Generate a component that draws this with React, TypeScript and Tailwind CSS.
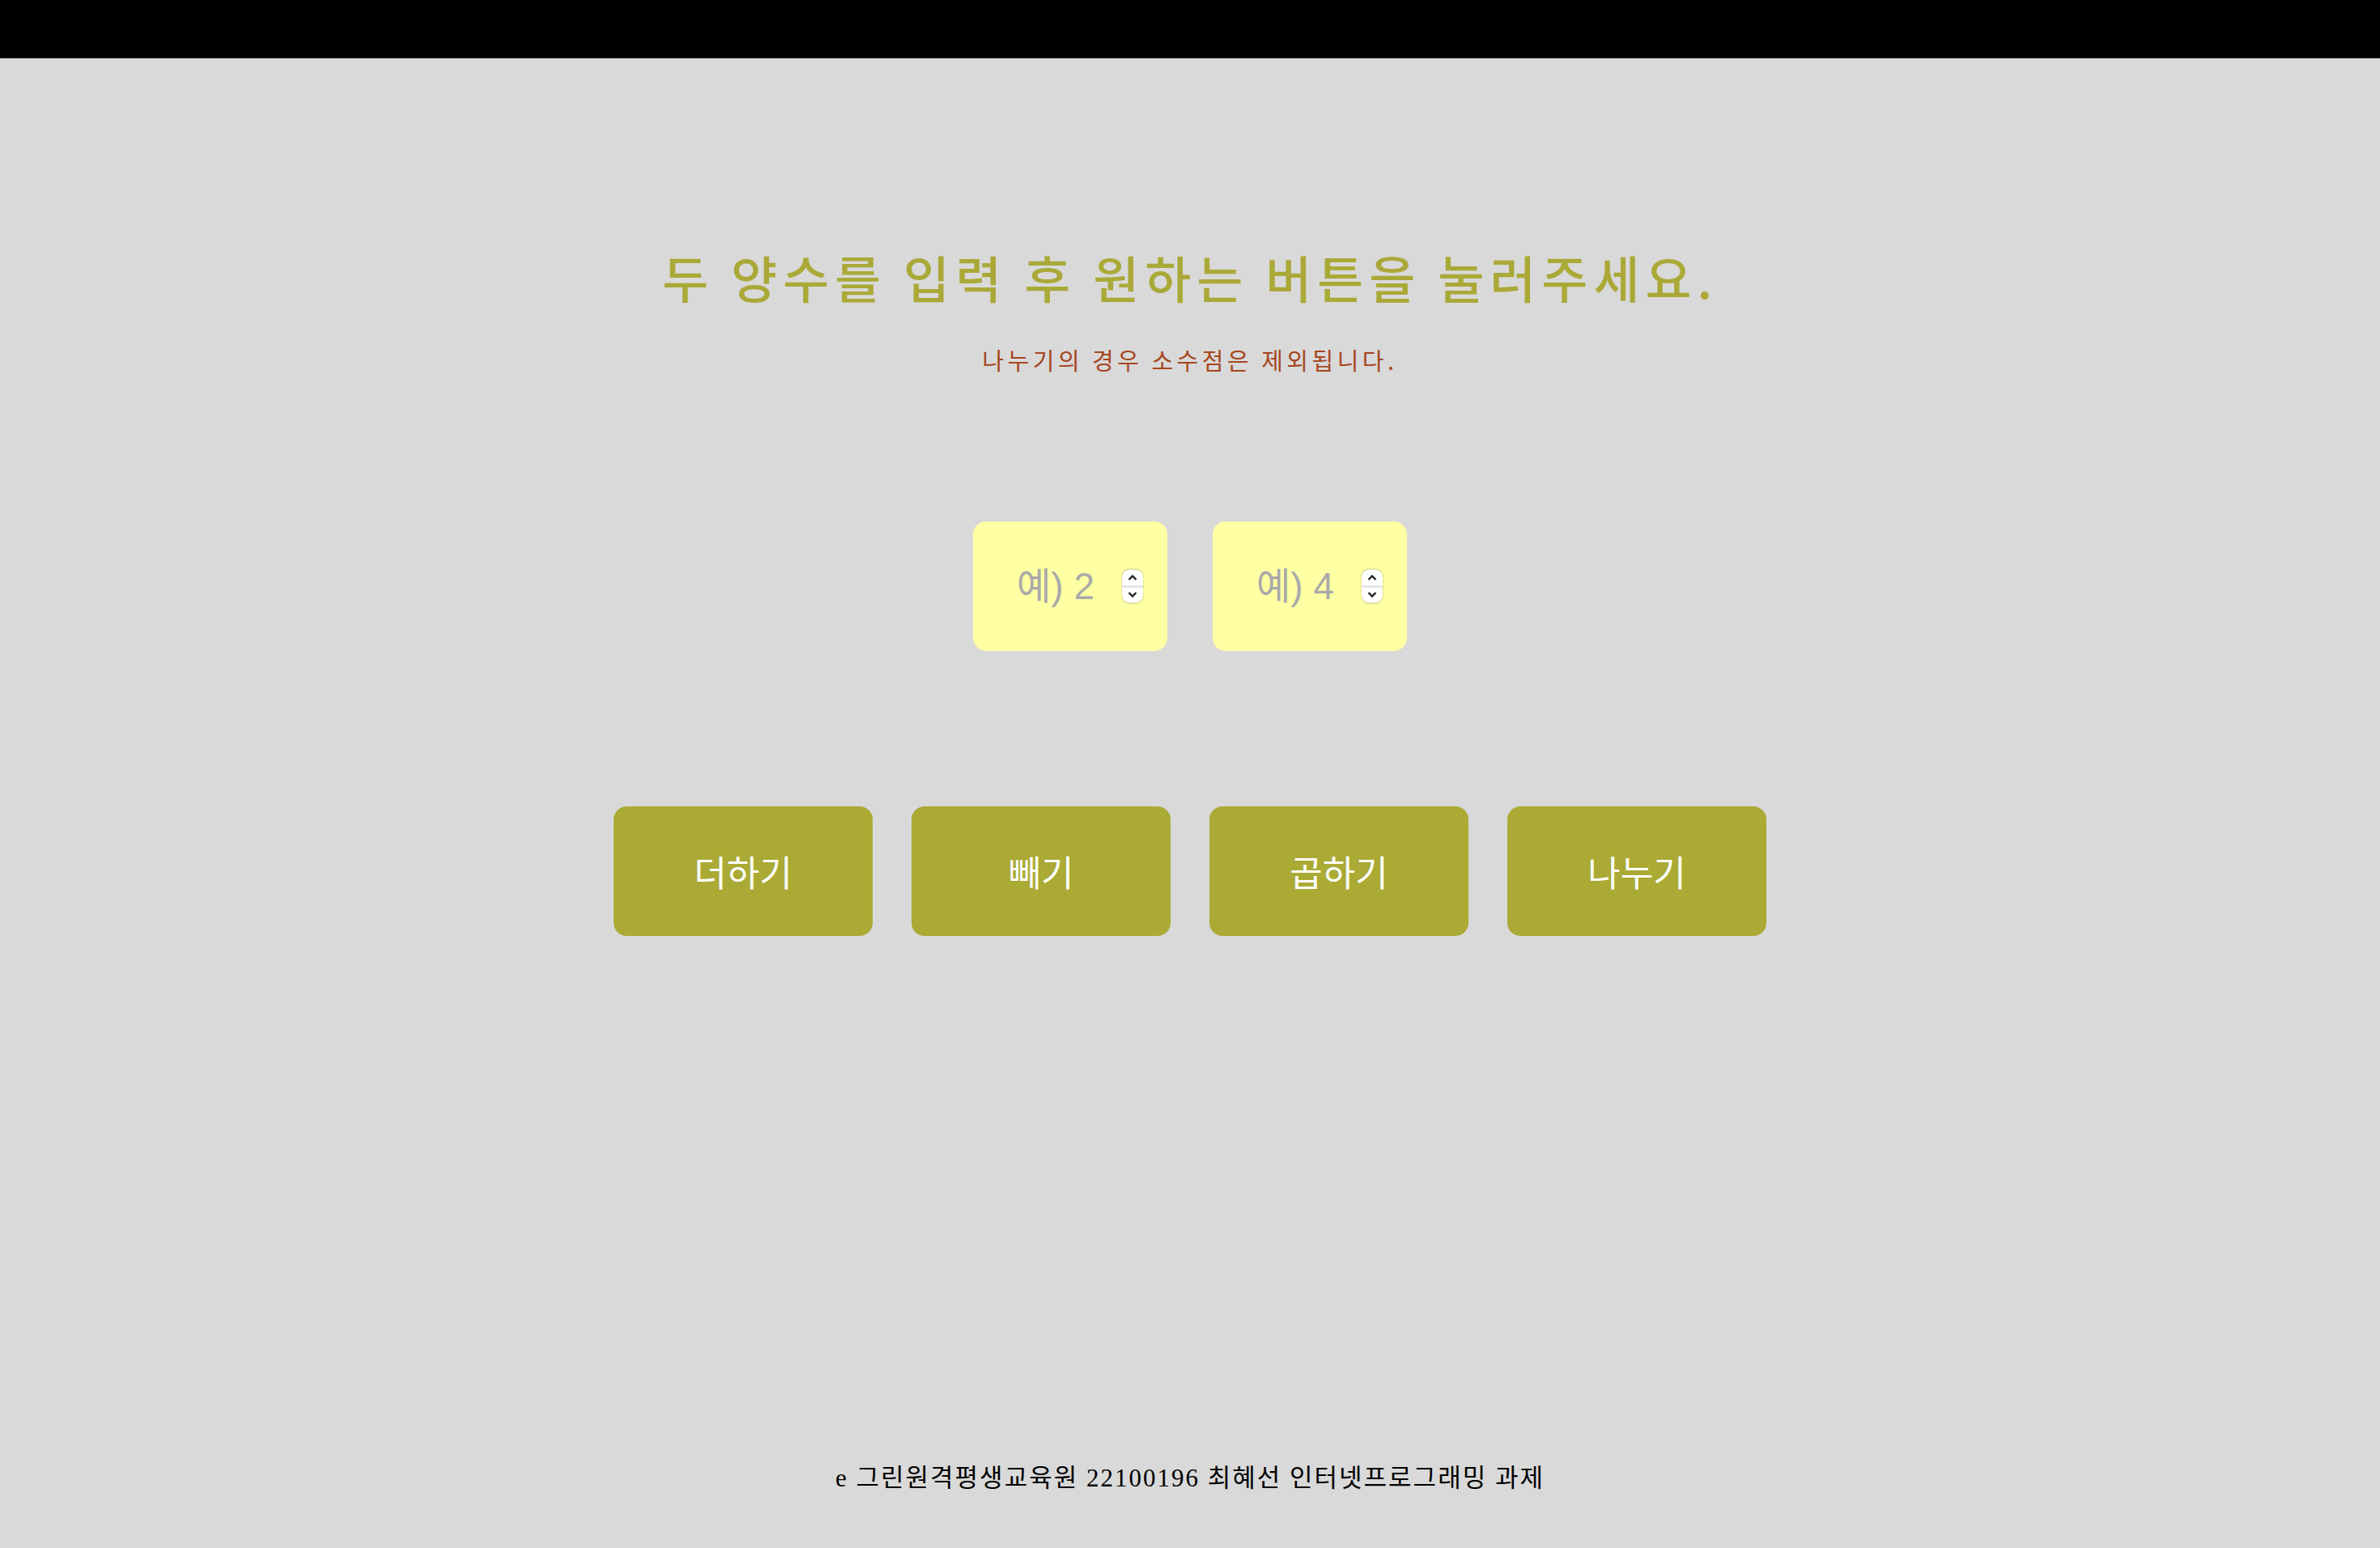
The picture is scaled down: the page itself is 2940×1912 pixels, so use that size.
import React from 'react';

const KR = "font-['Noto_Sans_CJK_KR',sans-serif]";

const Spinner: React.FC = () => (
  <div className="pointer-events-none absolute right-[30px] top-1/2 flex h-[41px] w-[26px] -translate-y-1/2 flex-col overflow-hidden rounded-[9px] bg-white shadow-[0_0_2px_rgba(0,0,0,0.35)]">
    <div className="flex flex-1 items-center justify-center border-b-2 border-[#dcdcdc]">
      <svg width="12" height="8" viewBox="0 0 12 8" fill="none">
        <path d="M1.5 6.5 L6 2 L10.5 6.5" stroke="#222" strokeWidth="2.4" />
      </svg>
    </div>
    <div className="flex flex-1 items-center justify-center">
      <svg width="12" height="8" viewBox="0 0 12 8" fill="none">
        <path d="M1.5 1.5 L6 6 L10.5 1.5" stroke="#222" strokeWidth="2.4" />
      </svg>
    </div>
  </div>
);

const NumberBox: React.FC<{ placeholder: string }> = ({ placeholder }) => (
  <div className="relative h-[160px] w-[240px]">
    <input
      type="number"
      placeholder={placeholder}
      className="h-full w-full rounded-[16px] bg-[#ffffa3] pl-[54px] pr-[60px] font-['Liberation_Sans','Noto_Sans_CJK_KR',sans-serif] text-[46px] text-black outline-none placeholder:text-[#a9a9a9] [appearance:textfield] [&::-webkit-inner-spin-button]:appearance-none [&::-webkit-outer-spin-button]:appearance-none"
    />
    <Spinner />
  </div>
);

const ops = ['더하기', '빼기', '곱하기', '나누기'];

export default function App() {
  return (
    <div className="flex min-h-screen flex-col bg-[#d9d9d9]">
      <header className="h-[72px] shrink-0 bg-black" />

      <main className="flex flex-col items-center">
        <h1 className={`${KR} mt-[234px] text-[62px] font-medium leading-[72px] tracking-[7px] text-[#aaa938]`}>
          두 양수를 입력 후 원하는 버튼을 눌러주세요.
        </h1>
        <p className={`${KR} mt-[46px] text-[29px] leading-[40px] tracking-[4.5px] text-[#a6461f]`}>
          나누기의 경우 소수점은 제외됩니다.
        </p>

        <div className="mt-[180px] flex gap-[56px]">
          <NumberBox placeholder="예) 2" />
          <NumberBox placeholder="예) 4" />
        </div>

        <div className="mt-[192px] flex gap-[48px]">
          {ops.map((op) => (
            <button
              key={op}
              className={`${KR} h-[160px] w-[320px] rounded-[16px] bg-[#aaaa35] text-[44px] text-white`}
            >
              {op}
            </button>
          ))}
        </div>
      </main>

      <footer className="mt-auto flex justify-center pb-[66px]">
        <p className="font-['Liberation_Serif','Noto_Sans_CJK_KR',serif] text-[31px] leading-[40px] tracking-[2px] text-black">
          e 그린원격평생교육원 22100196 최혜선 인터넷프로그래밍 과제
        </p>
      </footer>
    </div>
  );
}
